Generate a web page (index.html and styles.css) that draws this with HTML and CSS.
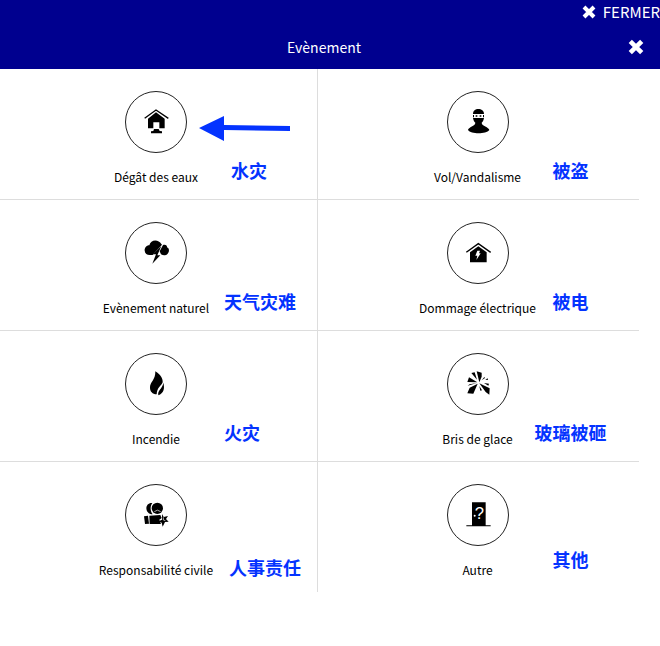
FILE: index.html
```html
<!DOCTYPE html>
<html lang="fr">
<head>
    <meta charset="UTF-8">
    <meta name="viewport" content="width=device-width, initial-scale=1.0">
    <title>Evènement</title>
    <link rel="stylesheet" href="styles.css">
</head>
<body>
    <header class="header">
        <div class="top-bar">
            <button type="button" class="close-btn">
                <svg class="cross" viewBox="0 0 14 14" aria-hidden="true"><path d="M2 2L12 12M12 2L2 12"/></svg>
                FERMER
            </button>
        </div>
        <div class="title-bar">
            <h1 class="title">Evènement</h1>
            <button type="button" class="close-btn" aria-label="Fermer">
                <svg class="cross cross-large" viewBox="0 0 14 14" aria-hidden="true"><path d="M2 2L12 12M12 2L2 12"/></svg>
            </button>
        </div>
    </header>

    <main class="events">
        <div class="event">
            <button type="button" class="event-btn">
                <span class="circle">
                    <svg class="icon" viewBox="0 0 78 78" aria-hidden="true">
                        <path class="line" d="M5 28L39 3L76 28"/>
                        <path d="M39 10L65 29V58H49V40H31V58H15V29ZM33 60H47L50 66L57 67V73H24V67L31 66Z"/>
                    </svg>
                </span>
                <span class="label">Dégât des eaux</span>
            </button>
            <svg class="arrow" viewBox="0 0 92 26" aria-hidden="true"><path d="M0 13L25 1V10L91 11V16L25 15V26Z"/></svg>
            <span class="note" lang="zh">水灾</span>
        </div>
        <div class="event">
            <button type="button" class="event-btn">
                <span class="circle">
                    <svg class="icon" viewBox="0 0 78 78" aria-hidden="true">
                        <path d="M24 15C24 5 31 0 40 0S57 5 57 15Z"/>
                        <path d="M24 18H27V25H24ZM32 19H37V23H32ZM44 19H49V23H44ZM54 18H57V25H54Z"/>
                        <path d="M24 27H57C56 34 53 39 50 41C50 51 72 54 73 63C63 76 18 76 9 63C10 54 31 51 31 41C28 39 25 34 24 27Z"/>
                    </svg>
                </span>
                <span class="label">Vol/Vandalisme</span>
            </button>
            <span class="note" lang="zh">被盗</span>
        </div>
        <div class="event">
            <button type="button" class="event-btn">
                <span class="circle">
                    <svg class="icon" viewBox="0 0 78 78" aria-hidden="true">
                        <path d="M55 12C47 -3 23 -3 19 16C10 16 4 24 5 32C6 41 12 45 20 45H29L57 14Z"/>
                        <path d="M60 15C67 12 73 16 72 22C79 24 80 36 74 41C69 47 61 47 54 43L50 34Z"/>
                        <path d="M55 18L30 43H39L28 71L52 46H43Z"/>
                    </svg>
                </span>
                <span class="label">Evènement naturel</span>
            </button>
            <span class="note note-near" lang="zh">天气灾难</span>
        </div>
        <div class="event">
            <button type="button" class="event-btn">
                <span class="circle">
                    <svg class="icon" viewBox="0 0 78 78" aria-hidden="true">
                        <path class="line" d="M4 37L40 11L77 37"/>
                        <path d="M40 19L65 37V67H15V37Z"/>
                        <path class="hole" d="M37 32H45L42 40H47L34 60L37 47H31Z"/>
                    </svg>
                </span>
                <span class="label">Dommage électrique</span>
            </button>
            <span class="note" lang="zh">被电</span>
        </div>
        <div class="event">
            <button type="button" class="event-btn">
                <span class="circle">
                    <svg class="icon" viewBox="0 0 78 78" aria-hidden="true">
                        <path d="M37 1C56 12 60 27 59 34C55 45 42 49 41 70C28 69 21 61 21 50C20 34 38 27 37 1Z"/>
                        <path d="M61 35C66 53 62 66 46 73C43 57 58 54 61 35Z"/>
                    </svg>
                </span>
                <span class="label">Incendie</span>
            </button>
            <span class="note note-near" lang="zh">火灾</span>
        </div>
        <div class="event">
            <button type="button" class="event-btn">
                <span class="circle">
                    <svg class="icon" viewBox="0 0 78 78" aria-hidden="true">
                        <path d="M35 1L50 5V17L43 34ZM19 6L29 4L36 26ZM12 19L37 34L7 33ZM36 36L14 40L8 44ZM38 38L25 68L7 67L14 50ZM43 37L74 52L73 71L62 63ZM57 36L72 38L70 44ZM50 28L58 18L60 21ZM61 26L68 22L69 27ZM43 45L51 58L46 59Z"/>
                    </svg>
                </span>
                <span class="label">Bris de glace</span>
            </button>
            <span class="note note-wide" lang="zh">玻璃被砸</span>
        </div>
        <div class="event">
            <button type="button" class="event-btn">
                <span class="circle">
                    <svg class="icon" viewBox="0 0 78 78" aria-hidden="true">
                        <path d="M28 3C4 1 4 36 29 37C21 27 21 13 28 3Z"/>
                        <circle cx="43" cy="19" r="17"/>
                        <path class="scratch" d="M34 29Q43 20 53 29"/>
                        <path d="M3 43L15 41L18 65L6 66ZM19 41L52 39L56 48L49 53L54 66H20Z"/>
                        <path d="M57 36L62 45L75 42L69 51L77 59L66 60L59 74L56 62L47 58L57 53Z"/>
                        <path class="scratch" d="M61 46V54L67 56"/>
                    </svg>
                </span>
                <span class="label">Responsabilité civile</span>
            </button>
            <span class="note note-low" lang="zh">人事责任</span>
        </div>
        <div class="event">
            <button type="button" class="event-btn">
                <span class="circle">
                    <svg class="icon" viewBox="0 0 78 78" aria-hidden="true">
                        <path d="M21 1H62V70H77V73H4V70H21Z"/>
                        <circle class="hole" cx="29" cy="41" r="3"/>
                        <text class="question" x="43" y="50">?</text>
                    </svg>
                </span>
                <span class="label">Autre</span>
            </button>
            <span class="note note-high" lang="zh">其他</span>
        </div>
    </main>
</body>
</html>
```
FILE: styles.css
```css
:root {
    --navy: #00008f;
    --blue: #0433ff;
    --line: #dddddd;
}

* {
    margin: 0;
    padding: 0;
    box-sizing: border-box;
}

body {
    background: #fff;
    color: #000;
    font-family: 'Noto Sans CJK SC', 'Noto Sans', sans-serif;
    overflow-x: hidden;
}

button {
    background: none;
    border: none;
    color: inherit;
    font: inherit;
    cursor: pointer;
}

.header {
    background: var(--navy);
    color: #fff;
    font-size: 15px;
    line-height: 24px;
}

.top-bar {
    display: flex;
    justify-content: flex-end;
}

.close-btn {
    display: flex;
    align-items: center;
    gap: 7px;
}

.cross {
    width: 14px;
    height: 14px;
    fill: none;
    stroke: #fff;
    stroke-width: 4;
}

.cross-large {
    width: 16px;
    height: 16px;
}

.title-bar {
    display: flex;
    align-items: center;
    height: 45px;
    padding-right: 16px;
}

.title {
    flex: 1;
    padding-left: 20px;
    font-size: 14px;
    font-weight: 400;
    text-align: center;
}

.events {
    display: grid;
    grid-template-columns: 1fr 1fr;
    margin: 0 21px 0 -3px;
}

.event {
    position: relative;
    padding-bottom: 12px;
    border-bottom: 1px solid var(--line);
}

.event:nth-child(odd) {
    border-right: 1px solid var(--line);
}

.event:nth-last-child(-n+2) {
    border-bottom: none;
}

.event-btn {
    display: flex;
    flex-direction: column;
    align-items: center;
    gap: 14px;
    width: 100%;
    padding: 22px 2px 0 0;
}

.circle {
    display: flex;
    align-items: center;
    justify-content: center;
    width: 62px;
    height: 62px;
    border: 1px solid #222;
    border-radius: 50%;
}

.icon {
    width: 26px;
    height: 26px;
    overflow: visible;
}

.icon .line {
    fill: none;
    stroke: #000;
    stroke-width: 4;
}

.icon .hole {
    fill: #fff;
}

.icon .scratch {
    fill: none;
    stroke: #fff;
    stroke-width: 2;
}

.icon .question {
    fill: #fff;
    font-family: 'Liberation Sans', Arial, sans-serif;
    font-size: 50px;
    text-anchor: middle;
}

.label {
    font-size: 12px;
    line-height: 20px;
}

/* translations laid over the grid */
.note {
    position: absolute;
    top: 89px;
    left: calc(50% + 74px);
    color: var(--blue);
    font-size: 18px;
    font-weight: 700;
    line-height: 24px;
    white-space: nowrap;
}

.note-near {
    left: calc(50% + 67px);
}

.note-wide {
    left: calc(50% + 56px);
}

.note-low {
    top: 93px;
    left: calc(50% + 72px);
}

.note-high {
    top: 85px;
}

.arrow {
    position: absolute;
    top: 46px;
    left: calc(50% + 42px);
    width: 92px;
    height: 26px;
    fill: var(--blue);
}
```
